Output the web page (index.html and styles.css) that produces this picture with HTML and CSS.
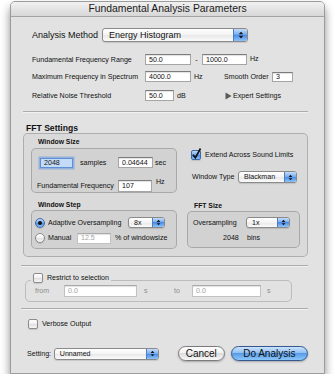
FILE: index.html
```html
<!DOCTYPE html>
<html lang="en">
  <head>
    <meta charset="UTF-8" />
    <title>Fundamental Analysis Parameters</title>
    <link rel="stylesheet" href="styles.css">
  </head>
  <body>
    <div class="window">
      <div class="titlebar">Fundamental Analysis Parameters</div>
      <div class="content">

        <div class="row method-row">
          <span class="method-label">Analysis Method</span>
          <div class="popup popup-method">
            <span class="popup-text">Energy Histogram</span>
            <span class="stepper"><svg viewBox="0 0 8 10"><path d="M4 0.5 L7 4 L1 4 Z M1 6 L7 6 L4 9.5 Z" fill="#151515"/></svg></span>
          </div>
        </div>

        <div class="row param-row row-freq">
          <span class="param-label">Fundamental Frequency Range</span>
          <input class="field w46" value="50.0" readonly>
          <span class="dash">-</span>
          <input class="field w45" value="1000.0" readonly>
          <span class="unit unit-up">Hz</span>
        </div>

        <div class="row param-row row-max">
          <span class="param-label">Maximum Frequency in Spectrum</span>
          <input class="field w46" value="4000.0" readonly>
          <span class="unit hz-gap">Hz</span>
          <span class="smooth-label">Smooth Order</span>
          <input class="field w21 h10" value="3" readonly>
        </div>

        <div class="row param-row row-noise">
          <span class="param-label">Relative Noise Threshold</span>
          <input class="field w29" value="50.0" readonly>
          <span class="unit db-gap">dB</span>
          <svg class="disclosure" viewBox="0 0 7 8"><path d="M0.5 0.5 L6.5 4 L0.5 7.5 Z" fill="#5a5a5a"/></svg>
          <span>Expert Settings</span>
        </div>

        <div class="sep sep-top"></div>

        <div class="group-title">FFT Settings</div>
        <div class="box fft-box">
          <div class="fft-top">
            <div class="col-left">
              <div class="sub-title">Window Size</div>
              <div class="box size-box">
                <div class="row size-row-a">
                  <div class="field field-focus w33">2048</div>
                  <span class="samples">samples</span>
                  <input class="field w35" value="0.04644" readonly>
                  <span class="sec">sec</span>
                </div>
                <div class="row size-row-b">
                  <span class="ff-label">Fundamental Frequency</span>
                  <input class="field w34 h12" value="107" readonly>
                  <span class="unit hz-raised">Hz</span>
                </div>
              </div>
            </div>
            <div class="col-right">
              <div class="row extend-row">
                <span class="check check-on"><svg viewBox="0 0 10 10"><path d="M2 4.8 L4.3 7.8 L9.5 -1.5" fill="none" stroke="#111" stroke-width="1.7"/></svg></span>
                <span class="check-text">Extend Across Sound Limits</span>
              </div>
              <div class="row wtype-row">
                <span class="wtype-label">Window Type</span>
                <div class="popup popup-wtype">
                  <span class="popup-text">Blackman</span>
                  <span class="stepper"><svg viewBox="0 0 8 10"><path d="M4 0.5 L7 4 L1 4 Z M1 6 L7 6 L4 9.5 Z" fill="#151515"/></svg></span>
                </div>
              </div>
            </div>
          </div>

          <div class="fft-bottom">
            <div class="col-left">
              <div class="sub-title">Window Step</div>
              <div class="box step-box">
                <div class="row step-row-a">
                  <span class="radio radio-on"><span class="dot"></span></span>
                  <span class="adaptive-label">Adaptive Oversampling</span>
                  <div class="popup popup-small w37">
                    <span class="popup-text">8x</span>
                    <span class="stepper"><svg viewBox="0 0 8 10"><path d="M4 0.5 L7 4 L1 4 Z M1 6 L7 6 L4 9.5 Z" fill="#151515"/></svg></span>
                  </div>
                </div>
                <div class="row step-row-b">
                  <span class="radio"></span>
                  <span class="manual-label">Manual</span>
                  <input class="field field-off w34" value="12.5" readonly>
                  <span class="percent">% of windowsize</span>
                </div>
              </div>
            </div>
            <div class="col-size">
              <div class="sub-title">FFT Size</div>
              <div class="box fftsize-box">
                <div class="row fftsize-row-a">
                  <span class="over-label">Oversampling</span>
                  <div class="popup popup-small w44">
                    <span class="popup-text">1x</span>
                    <span class="stepper"><svg viewBox="0 0 8 10"><path d="M4 0.5 L7 4 L1 4 Z M1 6 L7 6 L4 9.5 Z" fill="#151515"/></svg></span>
                  </div>
                </div>
                <div class="row fftsize-row-b">
                  <span class="bins-count">2048</span>
                  <span>bins</span>
                </div>
              </div>
            </div>
          </div>
        </div>

        <div class="sep sep-mid"></div>

        <fieldset class="restrict">
          <legend>
            <span class="legend-inner">
              <span class="check"></span>
              <span class="check-text">Restrict to selection</span>
            </span>
          </legend>
          <div class="row restrict-row">
            <span class="from-label">from</span>
            <input class="field field-off w73 h12" value="0.0" readonly>
            <span class="s-label">s</span>
            <span class="to-label">to</span>
            <input class="field field-off w69 h12" value="0.0" readonly>
            <span class="s-label2">s</span>
          </div>
        </fieldset>

        <div class="sep sep-low"></div>

        <div class="row verbose-row">
          <span class="check"></span>
          <span class="check-text">Verbose Output</span>
        </div>

        <div class="row bottom-row">
          <span class="setting-label">Setting:</span>
          <div class="popup popup-setting">
            <span class="popup-text">Unnamed</span>
            <span class="stepper"><svg viewBox="0 0 8 10"><path d="M4 0.5 L7 4 L1 4 Z M1 6 L7 6 L4 9.5 Z" fill="#151515"/></svg></span>
          </div>
          <button class="btn btn-cancel">Cancel</button>
          <button class="btn btn-default">Do Analysis</button>
        </div>

      </div>
    </div>
  </body>
</html>
```

FILE: styles.css
```css
body {
  margin: 0;
  background: #ffffff;
  font-family: "Liberation Sans", Arial, sans-serif;
  color: #111;
}

.window {
  box-sizing: border-box;
  width: 315px;
  height: 373px;
  margin: 1px 0 0 10px;
  border: 1px solid #9c9c9c;
  border-radius: 5px 5px 0 0;
  background: #e2e2e2;
  box-shadow: 0 6px 10px rgba(0, 0, 0, 0.45);
  display: flex;
  flex-direction: column;
}

.titlebar {
  box-sizing: border-box;
  height: 15px;
  border-bottom: 1px solid #a3a3a3;
  border-radius: 4px 4px 0 0;
  background: linear-gradient(#f1f1f1, #d7d7d7);
  text-align: center;
  font-size: 10.4px;
  line-height: 14px;
  color: #1a1a1a;
}

.content {
  display: flex;
  flex-direction: column;
  padding: 0 16px 0 10px;
}

.row {
  display: flex;
  align-items: center;
  font-size: 7.1px;
  white-space: nowrap;
}

/* popups */
.popup {
  box-sizing: border-box;
  display: flex;
  align-items: center;
  border: 1px solid #8a8a8a;
  border-radius: 3px;
  background: linear-gradient(#ffffff, #f3f3f3 50%, #e7e7e7 50%, #fbfbfb);
  box-shadow: 0 1px 1px rgba(0, 0, 0, 0.12);
  overflow: hidden;
  font-size: 7.1px;
}
.popup-text {
  flex: 1;
  padding-left: 5px;
}
.stepper {
  align-self: stretch;
  width: 11px;
  display: flex;
  align-items: center;
  justify-content: center;
  border-left: 1px solid #4f7cc0;
  background: linear-gradient(#c3dcfa, #7aaef0 45%, #4a8ae4 50%, #8cc4fa);
}
.stepper svg {
  width: 5px;
  height: 7px;
}
.popup-method {
  width: 146px;
  height: 14px;
  font-size: 9px;
}
.popup-method .popup-text {
  padding-left: 6px;
}
.popup-method .stepper {
  width: 13px;
}
.popup-method .stepper svg {
  width: 6px;
  height: 8px;
}
.popup-wtype {
  width: 59px;
  height: 12px;
}
.popup-small {
  height: 11px;
}
.popup-setting {
  width: 106px;
  height: 12px;
}

/* text fields */
.field {
  box-sizing: border-box;
  height: 11px;
  margin: 0;
  padding: 0 0 0 3px;
  border: 1px solid #a5a5a5;
  border-top-color: #7c7c7c;
  border-radius: 0;
  background: #ffffff;
  box-shadow: inset 0 1px 1px rgba(0, 0, 0, 0.12);
  font: 7.1px "Liberation Sans", Arial, sans-serif;
  color: #111;
  outline: none;
}
.field-focus {
  display: flex;
  align-items: center;
  height: 10px;
  background: #c4dbf7;
  border-color: #5f8fd5;
  box-shadow: 0 0 0 1.5px rgba(98, 148, 222, 0.55);
}
.field-off {
  color: #a3a3a3;
  border-color: #c2c2c2;
  border-top-color: #a9a9a9;
}
.w21 { width: 21px; }
.w29 { width: 29px; }
.w33 { width: 33px; }
.w34 { width: 34px; }
.w35 { width: 35px; }
.w37 { width: 37px; }
.w44 { width: 44px; }
.w45 { width: 45px; }
.w46 { width: 46px; }
.w69 { width: 69px; }
.w73 { width: 73px; }
.h10 { height: 10px; }
.h12 { height: 12px; }

/* checkboxes and radios */
.check,
.radio {
  box-sizing: border-box;
  flex: none;
  width: 10px;
  height: 10px;
  border: 1px solid #8b8b8b;
  border-radius: 2px;
  background: linear-gradient(#ffffff, #efefef 50%, #dedede 50%, #f7f7f7);
  box-shadow: 0 1px 1px rgba(0, 0, 0, 0.12);
  display: flex;
  align-items: center;
  justify-content: center;
}
.radio {
  border-radius: 50%;
}
.check-on,
.radio-on {
  border-color: #3e68a6;
  background: linear-gradient(#c3dcfa, #7aaef0 45%, #4a8ae4 50%, #8cc4fa);
}
.check svg {
  width: 10px;
  height: 10px;
  overflow: visible;
}
.dot {
  width: 4px;
  height: 4px;
  border-radius: 50%;
  background: #111;
}
.check-text {
  margin-left: 4px;
}

/* top block */
.method-row {
  margin-top: 11px;
  height: 14px;
}
.method-label {
  margin-left: 11px;
  width: 70px;
  font-size: 9px;
}
.param-row {
  height: 11px;
}
.row-freq { margin-top: 12px; }
.row-max { margin-top: 6px; }
.row-noise { margin-top: 8px; }
.param-label {
  margin-left: 11px;
  width: 113px;
}
.dash {
  width: 11px;
  text-align: center;
}
.unit {
  margin-left: 3px;
}
.unit-up {
  margin-bottom: 2px;
}
.hz-gap { width: 30px; }
.smooth-label { width: 48px; }
.db-gap { width: 48px; }
.disclosure {
  width: 7px;
  height: 8px;
  margin-right: 1px;
}

.sep {
  height: 1px;
  background: #acacac;
  box-shadow: 0 1px 0 rgba(255, 255, 255, 0.5);
}
.sep-top {
  margin: 10px 0 0 2px;
  width: 285px;
}
.sep-mid { margin-top: 8px; }
.sep-low { margin-top: 6px; }

/* FFT settings */
.group-title {
  margin: 11px 0 0 5px;
  height: 10px;
  line-height: 10px;
  font-size: 8.6px;
  font-weight: bold;
}
.box {
  box-sizing: border-box;
  border: 1px solid rgba(0, 0, 0, 0.2);
  border-radius: 5px;
  background: rgba(0, 0, 0, 0.035);
}
.fft-box {
  margin-left: 2px;
  width: 285px;
  height: 124px;
  padding-top: 4px;
}
.fft-top,
.fft-bottom {
  display: flex;
}
.fft-bottom {
  margin-top: 8px;
}
.col-left {
  margin-left: 7px;
  width: 146px;
}
.sub-title {
  margin-left: 7px;
  height: 8px;
  line-height: 8px;
  font-size: 6.8px;
  font-weight: bold;
}
.size-box {
  margin-top: 2px;
  height: 45px;
}
.size-row-a {
  margin: 8px 0 0 8px;
  height: 11px;
}
.samples {
  margin-left: 7px;
  width: 38px;
}
.sec {
  margin-left: 2px;
}
.size-row-b {
  margin: 12px 0 0 5px;
  height: 12px;
}
.ff-label {
  width: 81px;
}
.hz-raised {
  margin-left: 4px;
  align-self: flex-start;
  margin-top: -2px;
}

.col-right {
  margin-left: 14px;
}
.extend-row {
  margin-top: 12px;
  height: 10px;
}
.wtype-row {
  margin-top: 11px;
  height: 12px;
}
.wtype-label {
  margin-left: 1px;
  width: 46px;
}

.step-box {
  margin-top: 1px;
  height: 39px;
}
.step-row-a {
  margin: 6px 0 0 3px;
  height: 11px;
}
.adaptive-label {
  margin-left: 3px;
  width: 80px;
}
.step-row-b {
  margin: 4px 0 0 3px;
  height: 12px;
}
.manual-label {
  margin-left: 3px;
  width: 29px;
}
.percent {
  margin-left: 4px;
}

.col-size {
  margin: 1px 0 0 10px;
  width: 113px;
}
.fftsize-box {
  margin-top: 1px;
  height: 37px;
}
.fftsize-row-a {
  margin: 5px 0 0 5px;
  height: 11px;
}
.over-label {
  width: 53px;
}
.fftsize-row-b {
  margin: 5px 0 0 35px;
  height: 10px;
}
.bins-count {
  width: 24px;
}

/* restrict to selection */
.restrict {
  box-sizing: border-box;
  margin: 7px 0 0 4px;
  width: 267px;
  min-inline-size: 0;
  padding: 0 0 4px 0;
  border: 1px solid rgba(0, 0, 0, 0.17);
  border-radius: 5px;
}
.restrict legend {
  margin-left: 5px;
  padding: 0 2px;
  height: 14px;
}
.legend-inner {
  display: flex;
  align-items: flex-start;
  font-size: 7.1px;
  line-height: 10px;
}
.restrict-row {
  margin: -2px 0 0 9px;
  height: 12px;
  color: #8e8e8e;
}
.from-label { width: 29px; }
.s-label {
  margin-left: 7px;
  width: 30px;
}
.to-label { width: 18px; }
.s-label2 { margin-left: 6px; }

/* bottom */
.verbose-row {
  margin: 10px 0 0 7px;
  height: 10px;
}
.bottom-row {
  margin-top: 17px;
  height: 15px;
}
.setting-label {
  margin-left: 6px;
  width: 27px;
}
.btn {
  box-sizing: border-box;
  height: 15px;
  padding: 0;
  border-radius: 8px;
  font: 10px "Liberation Sans", Arial, sans-serif;
  color: #111;
  line-height: 13px;
  box-shadow: 0 1px 2px rgba(0, 0, 0, 0.25);
}
.btn-cancel {
  margin-left: 19px;
  width: 47px;
  border: 1px solid #7b7b7b;
  background: linear-gradient(#fdfdfd, #f2f2f2 45%, #dcdcdc 50%, #f8f8f8);
}
.btn-default {
  margin-left: 6px;
  width: 78px;
  border: 1px solid #35598f;
  background: linear-gradient(#cde3fc, #8fbff4 45%, #5a9be6 50%, #8ac7fb);
}
```
